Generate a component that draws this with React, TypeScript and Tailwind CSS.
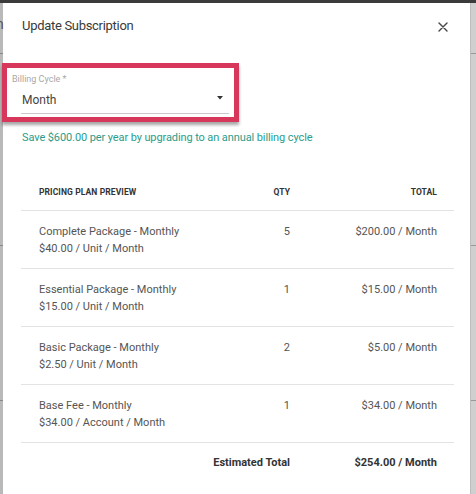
import React from "react";

const rows = [
  { name: "Complete Package - Monthly", unit: "$40.00 / Unit / Month", qty: "5", total: "$200.00 / Month" },
  { name: "Essential Package - Monthly", unit: "$15.00 / Unit / Month", qty: "1", total: "$15.00 / Month" },
  { name: "Basic Package - Monthly", unit: "$2.50 / Unit / Month", qty: "2", total: "$5.00 / Month" },
  { name: "Base Fee - Monthly", unit: "$34.00 / Account / Month", qty: "1", total: "$34.00 / Month" },
];

export default function App() {
  return (
    <div
      className="relative w-[476px] h-[494px] overflow-hidden bg-[#d9d9d9] flex flex-col"
      style={{ fontFamily: "Roboto, 'Noto Sans', sans-serif" }}
    >
      <div className="h-[3px] bg-[#3b3b3b] shrink-0" />
      <div className="flex flex-1 min-h-0">
        <div className="w-[3px] bg-[#b9b9b9] shrink-0 relative">
          <span className="absolute left-[-4px] top-[14px] text-[14px] text-[#555] leading-none">n</span>
          <div className="absolute left-0 top-[50px] w-[3px] h-px bg-[#888]" />
          <div className="absolute left-0 top-[242px] w-[3px] h-px bg-[#888]" />
          <div className="absolute left-0 top-[397px] w-[3px] h-px bg-[#888]" />
        </div>
        <div className="flex-1 bg-white flex flex-col">
          <div className="flex items-center justify-between pl-[19px] pr-[22px] pt-[11px]">
            <span className="text-[13px] leading-[24px] text-[#3a3a3a] tracking-[-0.3px]">Update Subscription</span>
            <svg width="10" height="10" viewBox="0 0 10 10" className="mt-[1px]">
              <path d="M1 1 L9 9 M9 1 L1 9" stroke="#444" strokeWidth="1.4" strokeLinecap="round" />
            </svg>
          </div>
          <div className="mt-[25px] -ml-[1px] w-[237px] h-[59px] border-[5px] border-[#d6375b] shadow-[0_3px_3px_rgba(0,0,0,0.35)] relative">
            <div className="pl-[5px] pt-[5px] text-[9px] leading-[12px] text-[#a8a8a8]">Billing Cycle *</div>
            <div className="ml-[14px] mr-[5px] mt-[3px] flex items-center justify-between border-b border-[#c9c9c9] h-[26px] pl-[1px] pr-[6px]">
              <span className="text-[12px] text-[#444] leading-[16px] mb-[1px]">Month</span>
              <svg width="6" height="4" viewBox="0 0 6 4" className="mb-[5px]">
                <path d="M0 0 L6 0 L3 3.5 Z" fill="#333" />
              </svg>
            </div>
          </div>
          <div className="pl-[19px] mt-[8px] text-[11px] leading-[16px] text-[#2c9c8c] tracking-[-0.1px]">
            Save $600.00 per year by upgrading to an annual billing cycle
          </div>
          <div className="ml-[18px] mr-[16px] mt-[39px] flex flex-col">
            <div className="flex items-end pb-[11px] border-b border-[#e3e3e3] text-[8.5px] font-bold text-[#333] leading-[14px] tracking-[0.1px]">
              <div className="pl-[18px] flex-1">PRICING PLAN PREVIEW</div>
              <div className="w-[60px] text-right">QTY</div>
              <div className="w-[164px] text-right pr-[17px]">TOTAL</div>
            </div>
            {rows.map((r) => (
              <div key={r.name} className="flex pt-[12px] pb-[11px] border-b border-[#e3e3e3] text-[11px] leading-[17px] text-[#555]">
                <div className="pl-[18px] flex-1 flex flex-col">
                  <span>{r.name}</span>
                  <span>{r.unit}</span>
                </div>
                <div className="w-[60px] text-right">{r.qty}</div>
                <div className="w-[164px] text-right pr-[17px]">{r.total}</div>
              </div>
            ))}
            <div className="flex pt-[11px] text-[11px] leading-[17px] font-bold text-[#333]">
              <div className="flex-1 text-right">Estimated Total</div>
              <div className="w-[164px] text-right pr-[17px]">$254.00 / Month</div>
            </div>
          </div>
        </div>
        <div className="w-[6px] bg-[#cfcfcf] shrink-0 relative border-l border-[#bdbdbd]">
          <div className="absolute left-0 top-[50px] w-[6px] h-px bg-[#999]" />
          <div className="absolute left-0 top-[242px] w-[6px] h-px bg-[#999]" />
          <div className="absolute left-0 top-[397px] w-[6px] h-px bg-[#999]" />
        </div>
      </div>
    </div>
  );
}
